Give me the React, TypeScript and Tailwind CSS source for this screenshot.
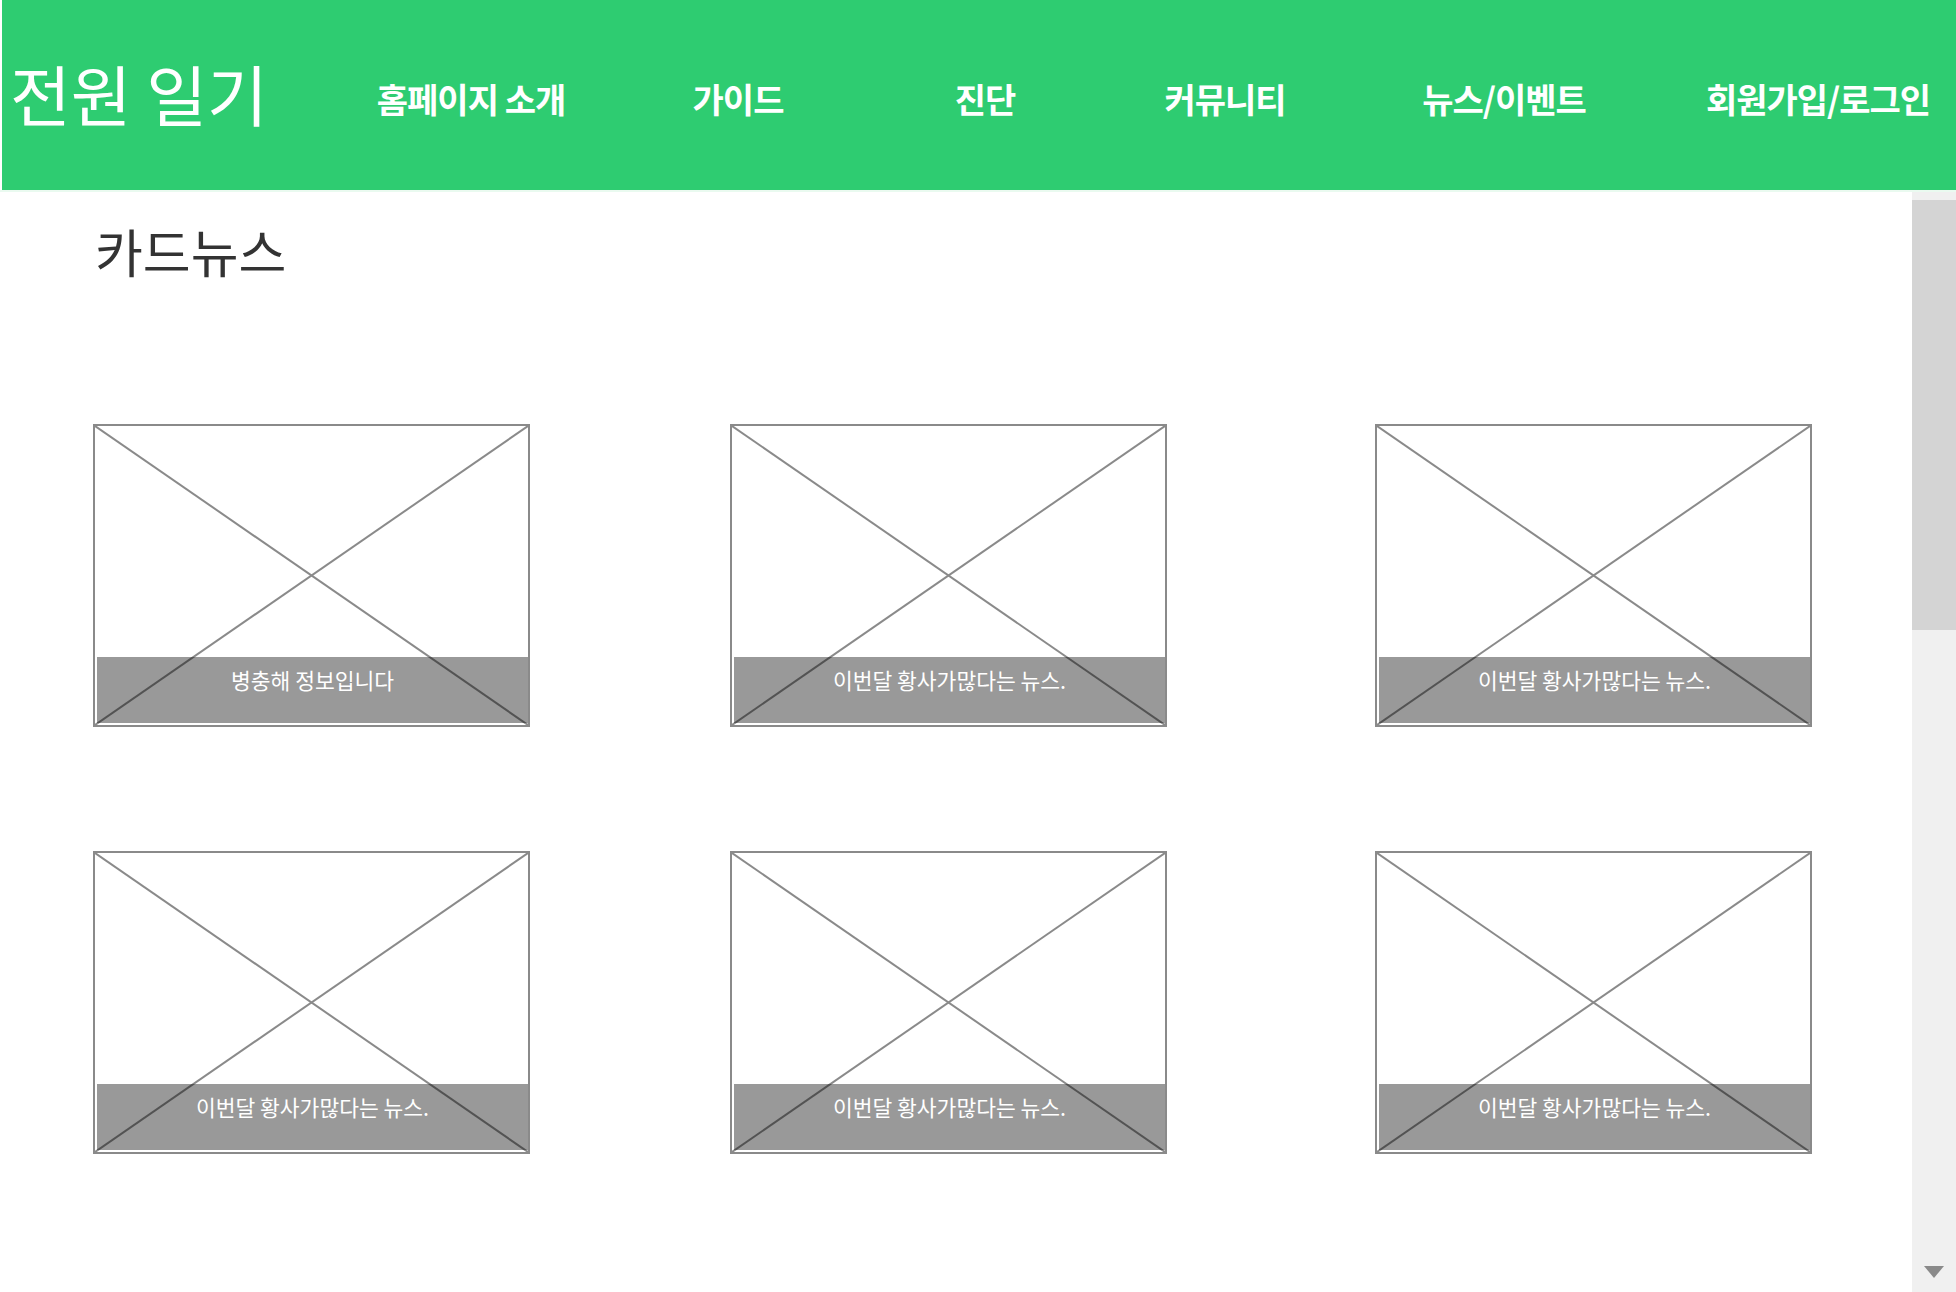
import React from "react";

const navItems = [
  { label: "홈페이지 소개", w: "w-[230px]", ml: "ml-[94px]" },
  { label: "가이드", w: "w-[230px]", ml: "ml-[37px]" },
  { label: "진단", w: "w-[230px]", ml: "ml-[17px]" },
  { label: "커뮤니티", w: "w-[230px]", ml: "ml-[10px]" },
  { label: "뉴스/이벤트", w: "w-[230px]", ml: "ml-[49px]" },
  { label: "회원가입/로그인", w: "w-[230px]", ml: "ml-[84px]" },
];

const rows = [
  ["병충해 정보입니다", "이번달 황사가많다는 뉴스.", "이번달 황사가많다는 뉴스."],
  ["이번달 황사가많다는 뉴스.", "이번달 황사가많다는 뉴스.", "이번달 황사가많다는 뉴스."],
];

const colGap = ["", "ml-[200px]", "ml-[208px]"];

function Card({ caption }: { caption: string }) {
  return (
    <div className="relative w-[437px] h-[303px] border-2 border-[#8a8a8a] bg-white shrink-0">
      {/* placeholder image */}
      <svg className="absolute inset-0 w-full h-full" viewBox="0 0 100 100" preserveAspectRatio="none">
        <line x1="0" y1="0" x2="100" y2="100" stroke="#8a8a8a" strokeWidth="2" vectorEffect="non-scaling-stroke" />
        <line x1="100" y1="0" x2="0" y2="100" stroke="#8a8a8a" strokeWidth="2" vectorEffect="non-scaling-stroke" />
      </svg>
      <div className="absolute left-[2px] right-0 bottom-[2px] h-[66px] bg-black/40 flex justify-center pt-[8px]">
        <span className="text-white text-[21.5px] leading-[30px]">{caption}</span>
      </div>
    </div>
  );
}

export default function App() {
  return (
    <div
      className="w-[1956px] h-[1292px] bg-white flex flex-col overflow-hidden"
      style={{ fontFamily: '"Noto Sans CJK KR", "Noto Sans", sans-serif' }}
    >
      {/* Header */}
      <div className="h-[190px] ml-[2px] bg-[#2ecc71] flex items-center shrink-0">
        <div className="w-[260px] pl-[8px] text-white text-[66px] leading-none -mt-[6px] whitespace-nowrap">
          전원 일기
        </div>
        {navItems.map((n) => (
          <div key={n.label} className={`${n.w} ${n.ml} text-center text-white font-bold text-[34px] leading-none mt-[8px] whitespace-nowrap tracking-[-1px]`}>
            {n.label}
          </div>
        ))}
      </div>

      {/* Body */}
      <div className="flex flex-1 min-h-0 border-t-2 border-[#eafaf0]">
        <div className="flex-1 pl-[93px]">
          <h1 className="text-[52px] leading-none text-[#333] mt-[33px] ml-[2px]">카드뉴스</h1>

          <div className="mt-[147px] flex flex-col gap-[124px]">
            {rows.map((row, ri) => (
              <div key={ri} className="flex">
                {row.map((c, ci) => (
                  <div key={ci} className={colGap[ci]}>
                    <Card caption={c} />
                  </div>
                ))}
              </div>
            ))}
          </div>
        </div>

        {/* Scrollbar */}
        <div className="w-[44px] bg-[#f0f0f0] flex flex-col items-stretch shrink-0">
          <div className="h-[8px]" />
          <div className="h-[430px] bg-[#d4d4d4]" />
          <div className="flex-1" />
          <div className="h-[26px] flex justify-center">
            <svg width="20" height="12" viewBox="0 0 20 12">
              <polygon points="0,0 20,0 10,12" fill="#8a8a8a" />
            </svg>
          </div>
        </div>
      </div>
    </div>
  );
}
